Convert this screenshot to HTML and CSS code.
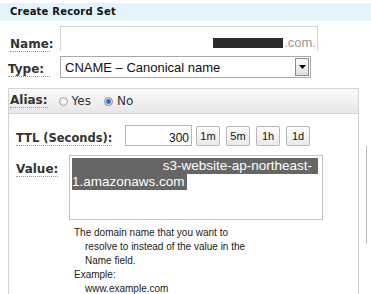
FILE: index.html
```html
<!DOCTYPE html>
<html>
<head>
<meta charset="utf-8">
<link rel="stylesheet" href="styles.css">
</head>
<body>
<div class="page">
  <div class="header">Create Record Set</div>
  <div class="row name-row">
    <span class="label">Name:</span>
    <div class="name-input"><span class="redact"></span><span class="suffix">.com.</span></div>
  </div>
  <div class="row type-row">
    <span class="label">Type:</span>
    <div class="select">
      <span class="select-text">CNAME – Canonical name</span>
      <span class="select-btn"><svg width="7" height="4" viewBox="0 0 7 4"><path d="M0 0h7L3.5 4z" fill="#000"/></svg></span>
    </div>
  </div>
  <div class="alias-box">
    <div class="alias-head">
      <span class="label">Alias:</span>
      <span class="radio"></span><span class="radio-label">Yes</span>
      <span class="radio checked"></span><span class="radio-label">No</span>
    </div>
    <div class="alias-body">
      <div class="ttl-row">
        <div class="label-cell ttl-cell"><span class="label">TTL (Seconds):</span></div>
        <div class="ttl-input">300</div>
        <span class="btn">1m</span>
        <span class="btn">5m</span>
        <span class="btn">1h</span>
        <span class="btn">1d</span>
      </div>
      <div class="value-row">
        <div class="label-cell value-cell"><span class="label">Value:</span></div>
        <div class="textarea">
          <div class="sel sel1">s3-website-ap-northeast-</div>
          <div class="sel sel2">1.amazonaws.com</div>
        </div>
      </div>
      <div class="help">
        <div class="h0">The domain name that you want to</div>
        <div class="h1">resolve to instead of the value in the</div>
        <div class="h1">Name field.</div>
        <div class="h0">Example:</div>
        <div class="h1">www.example.com</div>
      </div>
    </div>
  </div>
  <div class="side-line"></div>
</div>
</body>
</html>
```
FILE: styles.css
```css
html, body { margin: 0; padding: 0; background: #fff; }
body { width: 371px; height: 294px; overflow: hidden; font-family: "Liberation Sans", Arial, sans-serif; }
.page { position: relative; width: 371px; height: 294px; }
.header {
  margin-top: 3px; height: 18px; background: #e3f3fb;
  font: bold 10px "DejaVu Sans", Verdana, sans-serif; color: #111;
  padding-left: 10px; line-height: 18px; letter-spacing: 0.2px;
}
.label {
  font: bold 12px "DejaVu Sans", Verdana, sans-serif; color: #333;
  border-bottom: 1px dotted #999; line-height: 13px; white-space: nowrap;
}
.row { display: flex; align-items: flex-start; }
.name-row { margin-top: 5px; height: 25px; }
.name-row .label { margin: 12px 0 0 10px; width: 40px; }
.name-input {
  margin-left: 10px; width: 258px; height: 25px;
  border: 1px solid #d4d4d4; border-bottom: none;
  display: flex; justify-content: flex-end; align-items: center; padding-top: 7px; box-sizing: border-box;
}
.redact { width: 70px; height: 10px; background: #2b2b2b; }
.suffix { font-size: 13px; color: #999; padding-right: 1px; margin-left: 1px; }
.type-row { margin-top: 5px; }
.type-row .label { margin: 7px 0 0 8px; width: 42px; }
.select {
  margin-left: 10px; width: 251px; height: 22px; box-sizing: border-box;
  border: 1px solid #a9a9a9; display: flex; align-items: center; justify-content: space-between;
}
.select-text { font-size: 13px; color: #111; padding-left: 4px; }
.select-btn {
  width: 14px; height: 18px; margin-right: 1px; box-sizing: border-box;
  border: 1px solid #8a8a8a; background: linear-gradient(#fafafa, #e0e0e0);
  display: flex; align-items: center; justify-content: center;
}
.alias-box {
  margin: 10px 0 0 8px; width: 351px; height: 220px; box-sizing: border-box;
  border: 1px solid #d3d3d3; border-bottom: none;
}
.alias-head {
  height: 24px; background: linear-gradient(#fbfbfb, #e6e6e6); border-bottom: 1px solid #d6d6d6;
  display: flex; align-items: center; padding-left: 1px;
}
.alias-head .label { margin-right: 11px; }
.radio {
  width: 9px; height: 9px; border-radius: 50%; border: 1px solid #a5a5a5;
  background: radial-gradient(#fff, #ddd); box-sizing: border-box; margin-right: 4px;
}
.radio.checked { background: radial-gradient(circle, #2a5ea8 0, #3c7dd0 2px, #dde 3px, #fff 4px); border-color: #888; }
.radio-label { font: 12px "DejaVu Sans", Verdana, sans-serif; color: #333; margin-right: 13px; }
.alias-body { padding: 11px 0 0 7px; }
.label-cell { flex: 0 0 auto; }
.ttl-row { display: flex; align-items: flex-start; }
.ttl-cell { width: 109px; padding-top: 3px; }
.ttl-cell .label { font-size: 11.5px; }
.ttl-input {
  width: 67px; height: 21px; box-sizing: border-box; flex: 0 0 auto;
  border: 1px solid #b5b5b5; font-size: 12px; text-align: right; padding: 5px 2px 0 0; color: #111;
}
.btn {
  margin-left: 4px; width: 24px; height: 20px; box-sizing: border-box; margin-top: 1px; flex: 0 0 auto;
  border: 1px solid #b8b8b8; border-radius: 2px; background: linear-gradient(#fdfdfd, #e9e9e9);
  font-size: 11px; text-align: center; line-height: 18px; color: #111;
}
.btn + .btn { margin-left: 6px; }
.value-row { display: flex; align-items: flex-start; margin-top: 9px; }
.value-cell { width: 53px; padding-top: 4px; }
.textarea {
  width: 254px; height: 65px; box-sizing: border-box; flex: 0 0 auto;
  border: 1px solid #c3c3c3; padding: 2px 0 0 2px; font-size: 13.5px; line-height: 16px;
}
.sel { background: #666; color: #fff; display: inline-block; }
.sel1 { width: 246px; text-align: right; box-sizing: border-box; padding-right: 6px; }
.sel2 { padding-right: 2px; }
.help { margin: 6px 0 0 58px; font-size: 10px; line-height: 14px; color: #222; }
.help div { height: 14px; }
.h1 { padding-left: 11px; }
.side-line { position: absolute; left: 366px; top: 143px; width: 1px; height: 98px; background: #bbb; }
```
